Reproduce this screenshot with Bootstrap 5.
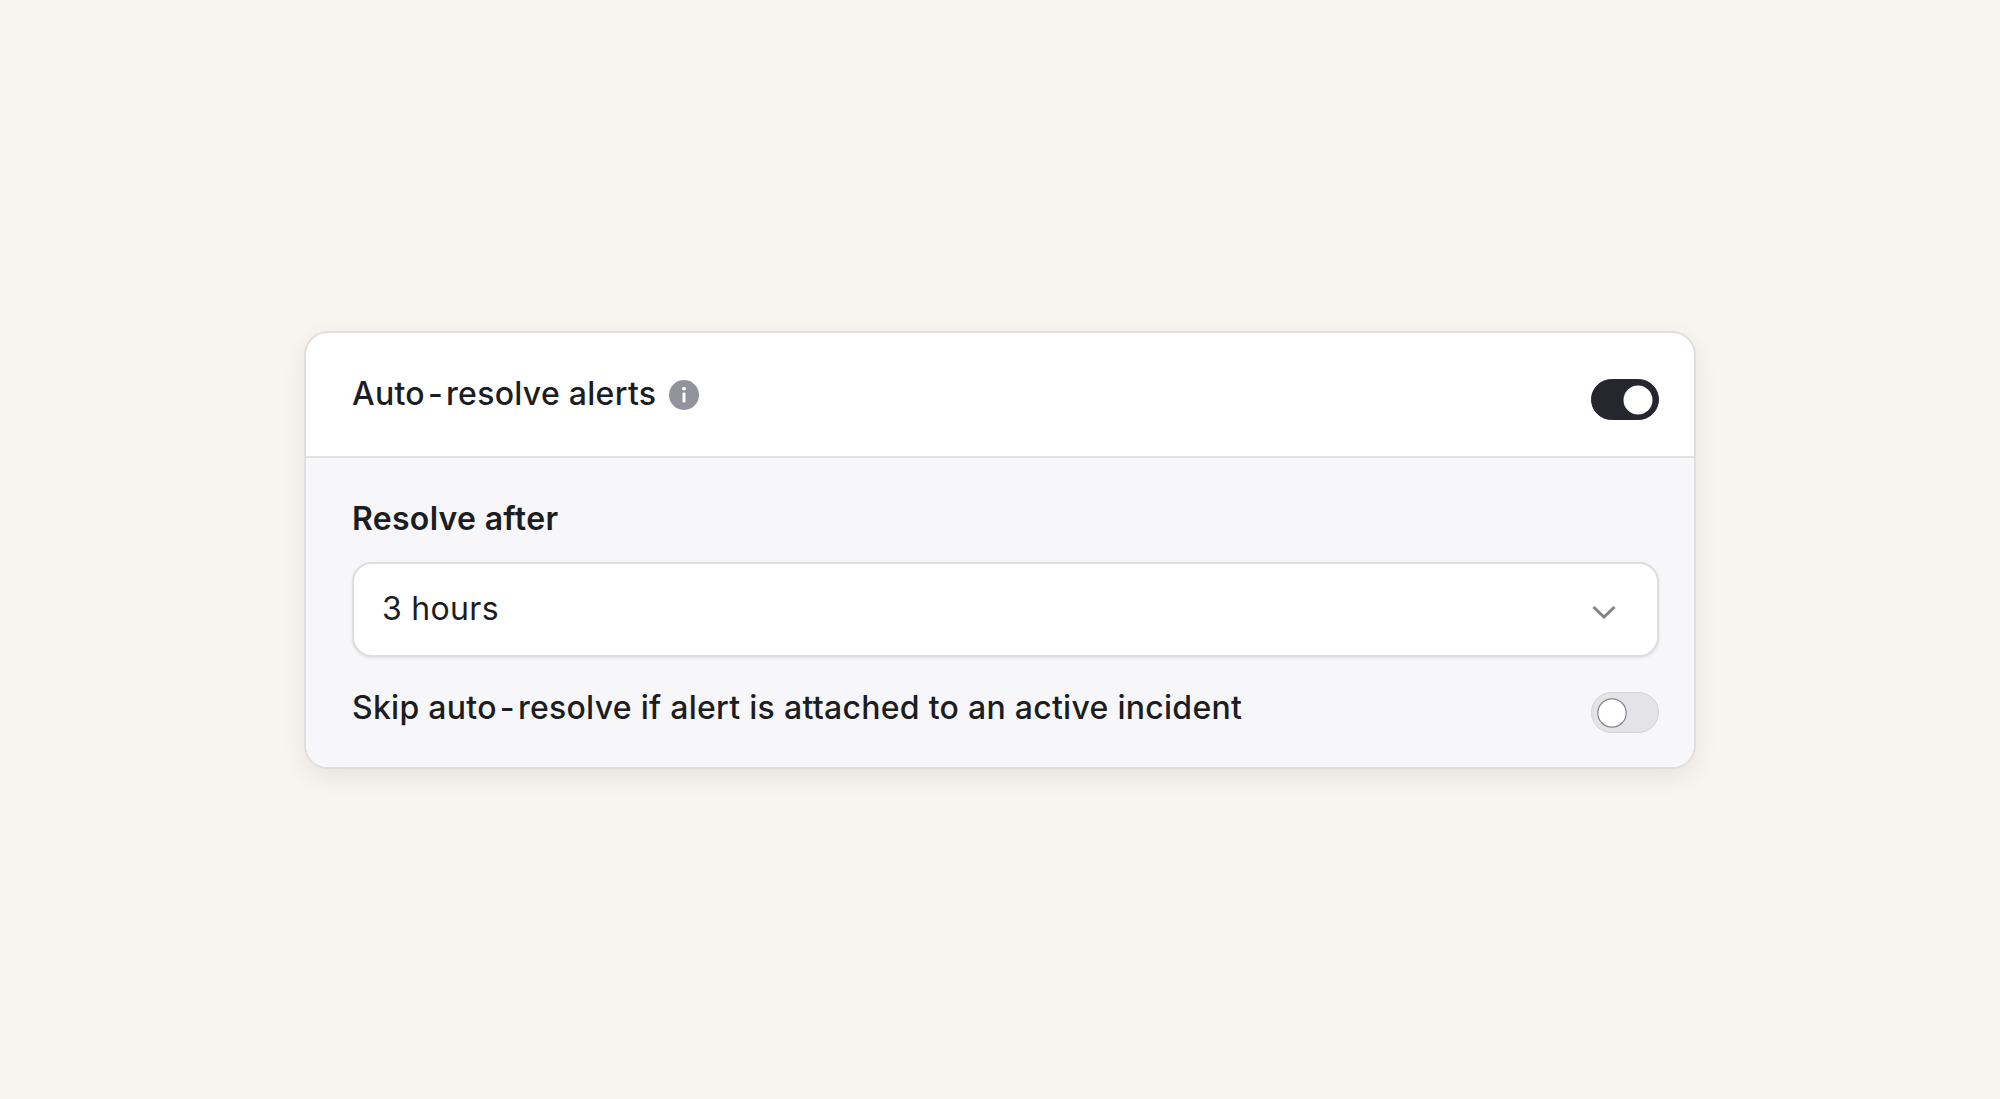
<!DOCTYPE html>
<html lang="en">
<head>
    <meta charset="UTF-8">
    <meta name="viewport" content="width=device-width, initial-scale=1.0">
    <title>Auto-resolve alerts</title>
    <link href="https://cdn.jsdelivr.net/npm/bootstrap@5.3.3/dist/css/bootstrap.min.css" rel="stylesheet">
    <style>
        body { background: #f8f5f0; font-family: Inter, "Liberation Sans", sans-serif; color: #1c1d22; }
        .page-wrap { min-height: 1099px; padding-top: 1px; }
        .settings-card { width: 1392px; border: 2px solid #e0dfdc; border-radius: 24px; box-shadow: 0 8px 22px rgba(60, 50, 40, .09); overflow: hidden; background: #fff; }
        .settings-head { height: 125px; padding: 10px 35px 0 46px; border-bottom: 2px solid #e1e1e4; }
        .settings-body { background: #f7f7f9; padding: 41px 35px 34px 46px; }
        .row-text { font-size: 32px; line-height: 40px; font-weight: 500; letter-spacing: .28px; }
        .hy { margin: 0 3px; }
        .head-label { margin-top: -12px; }
        .field-title { font-size: 32px; line-height: 40px; font-weight: 600; letter-spacing: .3px; margin-bottom: 23px; }
        .info-dot { width: 30px; height: 30px; flex: none; margin-top: 2px; margin-left: 5px; }
        .settings-card .form-select { height: 95px; font-size: 32px; color: #1c1d22; letter-spacing: .3px; padding: 0 28px 2px; border: 2px solid #dededf; border-radius: 20px; box-shadow: 0 1px 3px rgba(30, 30, 40, .1);
            background-size: 26px 16px; background-position: right 40px top calc(50% + 2px);
            background-image: url("data:image/svg+xml,%3Csvg xmlns='http://www.w3.org/2000/svg' viewBox='0 0 26 16'%3E%3Cpath d='M2.5 3l10.5 10L23.5 3' fill='none' stroke='%23828288' stroke-width='3'/%3E%3C/svg%3E"); }
        .skip-row { margin-top: 35px; }
        .skip-row .row-text { margin-top: -10px; }
        .form-switch.toggle-wrap { padding: 0; margin: 0; min-height: 0; display: flex; }
        .form-switch.toggle-wrap .form-check-input { width: 68px; height: 41px; margin: 0; float: none; border-radius: 21px; box-shadow: none; background-size: 30px 30px; }
        .toggle-on .form-check-input:checked { background-color: #26272e; border: 1px solid #26272e; background-position: right 5px center;
            background-image: url("data:image/svg+xml,%3Csvg xmlns='http://www.w3.org/2000/svg' viewBox='0 0 30 30'%3E%3Ccircle cx='15' cy='15' r='14.5' fill='%23fff'/%3E%3C/svg%3E"); }
        .toggle-off .form-check-input { background-color: #e3e3e8; border: 1px solid #d3d3d8; background-position: left 5px center;
            background-image: url("data:image/svg+xml,%3Csvg xmlns='http://www.w3.org/2000/svg' viewBox='0 0 30 30'%3E%3Ccircle cx='15' cy='15' r='14.2' fill='%23fff' stroke='%2385858c' stroke-width='1.2'/%3E%3C/svg%3E"); }
    </style>
</head>
<body>
    <div class="page-wrap d-flex align-items-center justify-content-center">
        <div class="settings-card">
            <div class="settings-head d-flex align-items-center justify-content-between">
                <div class="d-flex align-items-center gap-2 head-label">
                    <span class="row-text">Auto<span class="hy">-</span>resolve alerts</span>
                    <svg class="info-dot" viewBox="0 0 30 30" aria-hidden="true">
                        <circle cx="15" cy="15" r="15" fill="#92929c"/>
                        <circle cx="15" cy="8.6" r="1.9" fill="#fff"/>
                        <rect x="13.5" y="12.5" width="3" height="10" rx="1" fill="#fff"/>
                    </svg>
                </div>
                <div class="form-check form-switch toggle-wrap toggle-on">
                    <input class="form-check-input" type="checkbox" role="switch" checked aria-label="Auto-resolve alerts">
                </div>
            </div>
            <div class="settings-body">
                <label for="resolve-after" class="d-block field-title">Resolve after</label>
                <select id="resolve-after" class="form-select">
                    <option selected>3 hours</option>
                    <option>6 hours</option>
                    <option>12 hours</option>
                </select>
                <div class="skip-row d-flex align-items-center justify-content-between">
                    <span class="row-text">Skip auto<span class="hy">-</span>resolve if alert is attached to an active incident</span>
                    <div class="form-check form-switch toggle-wrap toggle-off">
                        <input class="form-check-input" type="checkbox" role="switch" aria-label="Skip auto-resolve">
                    </div>
                </div>
            </div>
        </div>
    </div>
<script src="https://cdn.jsdelivr.net/npm/bootstrap@5.3.3/dist/js/bootstrap.bundle.min.js"></script>
</body>
</html>
